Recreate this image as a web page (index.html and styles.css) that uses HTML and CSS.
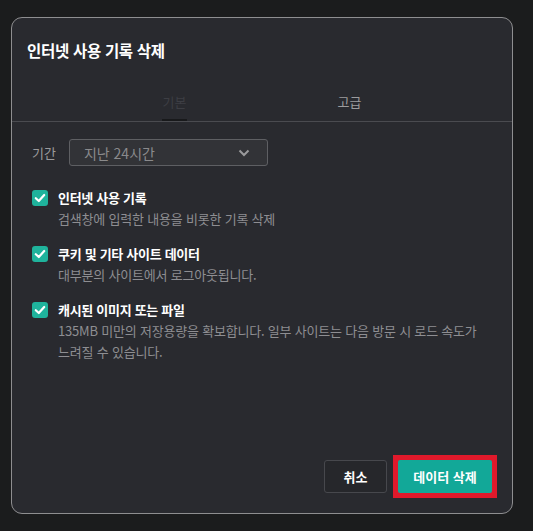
FILE: index.html
```html
<!DOCTYPE html>
<html lang="ko">
<head>
<meta charset="utf-8">
<link rel="stylesheet" href="styles.css">
</head>
<body>
<div class="dialog">
  <h1 class="title">인터넷 사용 기록 삭제</h1>
  <div class="tabs">
    <div class="tab active">기본</div>
    <div class="tab">고급</div>
  </div>
  <div class="content">
    <div class="range">
      <span class="range-label">기간</span>
      <div class="select">
        <span>지난 24시간</span>
        <svg class="chev" width="12" height="8" viewBox="0 0 12 8"><path d="M1.5 1.5 L6 6 L10.5 1.5" fill="none" stroke="#9a9a9c" stroke-width="2"/></svg>
      </div>
    </div>
    <div class="option">
      <span class="check"><svg width="16" height="16" viewBox="0 0 16 16"><path d="M3.8 8.2 L6.8 11 L12.2 5" fill="none" stroke="#fff" stroke-width="2.2" stroke-linecap="round" stroke-linejoin="round"/></svg></span>
      <div class="option-text">
        <div class="option-title">인터넷 사용 기록</div>
        <div class="option-desc">검색창에 입력한 내용을 비롯한 기록 삭제</div>
      </div>
    </div>
    <div class="option">
      <span class="check"><svg width="16" height="16" viewBox="0 0 16 16"><path d="M3.8 8.2 L6.8 11 L12.2 5" fill="none" stroke="#fff" stroke-width="2.2" stroke-linecap="round" stroke-linejoin="round"/></svg></span>
      <div class="option-text">
        <div class="option-title">쿠키 및 기타 사이트 데이터</div>
        <div class="option-desc">대부분의 사이트에서 로그아웃됩니다.</div>
      </div>
    </div>
    <div class="option">
      <span class="check"><svg width="16" height="16" viewBox="0 0 16 16"><path d="M3.8 8.2 L6.8 11 L12.2 5" fill="none" stroke="#fff" stroke-width="2.2" stroke-linecap="round" stroke-linejoin="round"/></svg></span>
      <div class="option-text">
        <div class="option-title">캐시된 이미지 또는 파일</div>
        <div class="option-desc">135MB 미만의 저장용량을 확보합니다. 일부 사이트는 다음 방문 시 로드 속도가 느려질 수 있습니다.</div>
      </div>
    </div>
  </div>
  <div class="footer">
    <button class="btn cancel">취소</button>
    <span class="highlight"><button class="btn primary">데이터 삭제</button></span>
  </div>
</div>
</body>
</html>
```

FILE: styles.css
```css
* { box-sizing: border-box; }
html, body { margin: 0; padding: 0; }
body {
  background: #1b1c1d;
  font-family: "Noto Sans CJK KR", "Noto Sans", sans-serif;
  width: 533px;
  height: 531px;
  padding: 17px 0 0 11px;
  overflow: hidden;
}
.dialog {
  width: 502px;
  height: 497px;
  background: #292a2f;
  border: 1px solid #8e8e90;
  border-radius: 11px;
  display: flex;
  flex-direction: column;
}
.title {
  margin: 0;
  padding: 22px 0 0 15px;
  font-size: 15.5px;
  line-height: 20px;
  font-weight: 700;
  color: #ffffff;
  letter-spacing: -0.3px;
}
.tabs {
  display: flex;
  justify-content: center;
  margin-top: 32px;
  border-bottom: 1px solid #4a4b50;
}
.tab {
  width: 175px;
  display: flex;
  justify-content: center;
  font-size: 13px;
  line-height: 20px;
  color: #9c9c9e;
  padding-bottom: 9px;
  position: relative;
}
.tab.active { color: #3d3e44; }
.tab.active::after {
  content: "";
  position: absolute;
  bottom: 0;
  left: 75px;
  width: 25px;
  height: 2px;
  background: #18191b;
}
.content {
  padding: 17px 20px 0 20px;
}
.range {
  display: flex;
  align-items: center;
  gap: 13px;
}
.range-label {
  font-size: 13px;
  color: #9a9a9c;
}
.select {
  width: 199px;
  height: 27px;
  border: 1px solid #5e5f63;
  border-radius: 3px;
  background: #323337;
  display: flex;
  align-items: center;
  justify-content: space-between;
  padding: 0 17px 0 14px;
  font-size: 14px;
  color: #8a8a8c;
}
.option {
  display: flex;
  gap: 10px;
  margin-top: 22px;
}
.option + .option { margin-top: 15px; }
.check {
  flex: none;
  width: 16px;
  height: 16px;
  margin-top: 2px;
  border-radius: 3px;
  background: #1fb39c;
  display: flex;
}
.option-text { flex: 1; }
.option-title {
  font-size: 13px;
  line-height: 20px;
  font-weight: 700;
  color: #ffffff;
  letter-spacing: -0.3px;
}
.option-desc {
  font-size: 13px;
  line-height: 21px;
  color: #8e8e92;
  letter-spacing: -0.2px;
  word-break: keep-all;
}
.footer {
  margin-top: auto;
  display: flex;
  justify-content: flex-end;
  align-items: center;
  gap: 6px;
  padding: 0 15px 15px 0;
}
.btn {
  height: 33px;
  border-radius: 3px;
  font-family: inherit;
  font-size: 13px;
  font-weight: 700;
  color: #ffffff;
  padding: 0;
  display: block;
}
.cancel {
  width: 63px;
  background: #26272b;
  border: 1px solid #47484d;
}
.highlight {
  display: block;
  padding: 5px;
  background: #e0192b;
}
.primary {
  width: 94px;
  background: #12a898;
  border: none;
  border-radius: 2px;
}
```
